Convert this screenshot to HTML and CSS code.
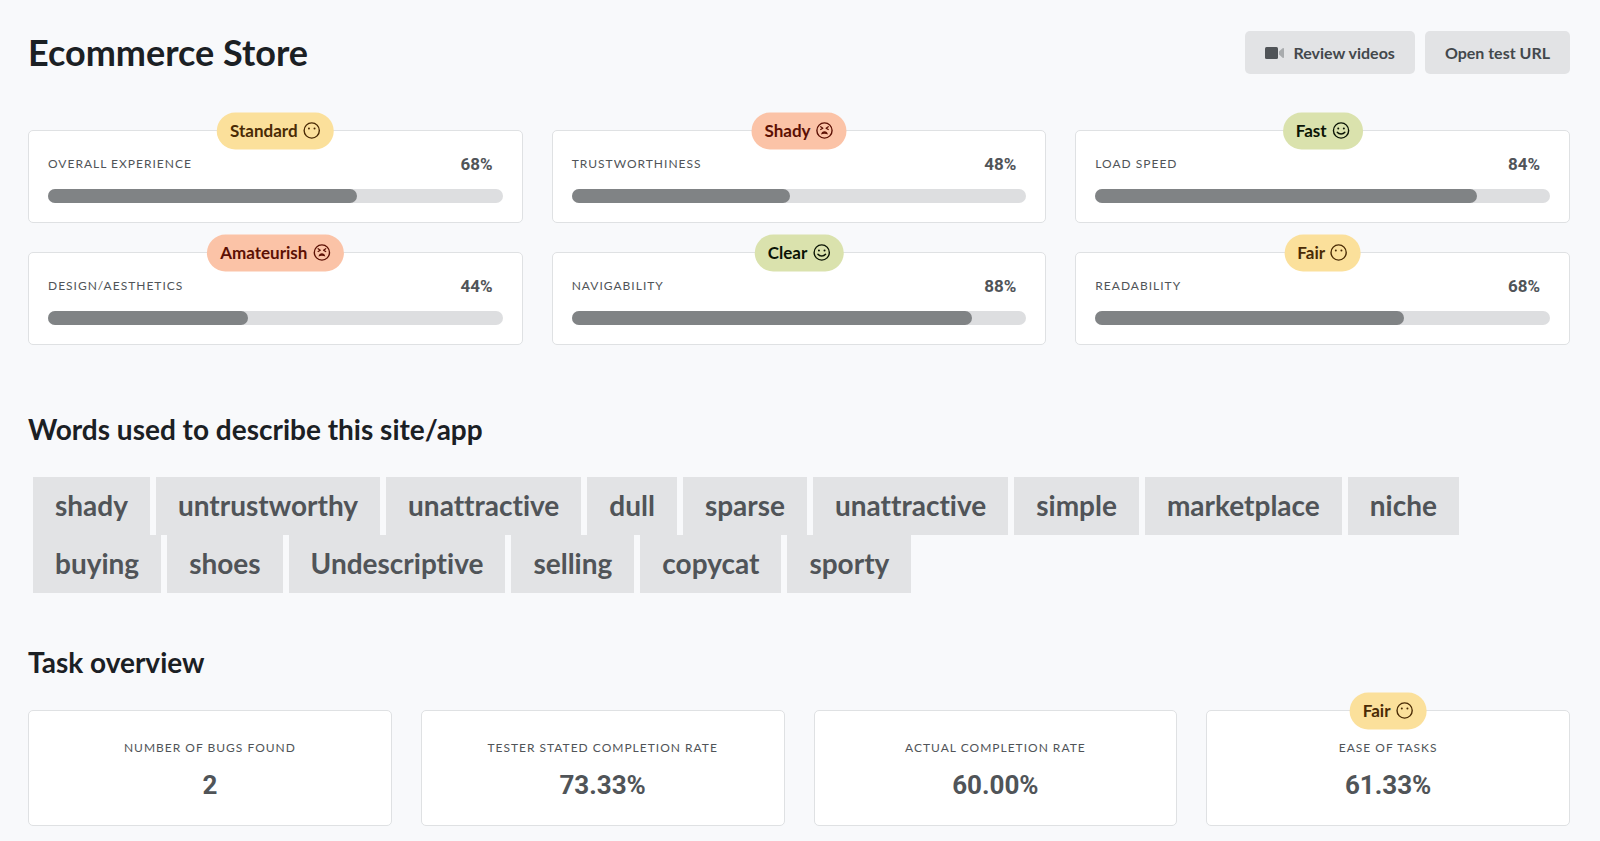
FILE: index.html
```html
<!DOCTYPE html>
<html lang="en">
<head>
  <meta charset="UTF-8">
  <meta name="viewport" content="width=device-width, initial-scale=1">
  <title>Ecommerce Store</title>
  <link rel="stylesheet" href="styles.css">
</head>
<body>

<!-- Face icons used by the rating badges -->
<svg class="sprite" aria-hidden="true">
  <symbol id="face-neutral" viewBox="0 0 18 18">
    <circle cx="9" cy="9" r="7.6" fill="none" stroke="currentColor" stroke-width="1.4"/>
    <circle cx="6.2" cy="7" r="1" fill="currentColor"/>
    <circle cx="11.8" cy="7" r="1" fill="currentColor"/>
  </symbol>
  <symbol id="face-happy" viewBox="0 0 18 18">
    <circle cx="9" cy="9" r="7.6" fill="none" stroke="currentColor" stroke-width="1.4"/>
    <circle cx="6.2" cy="7" r="1" fill="currentColor"/>
    <circle cx="11.8" cy="7" r="1" fill="currentColor"/>
    <path d="M5.2 10.8c1.7 2.2 5.9 2.2 7.6 0" fill="none" stroke="currentColor" stroke-width="1.4" stroke-linecap="round"/>
  </symbol>
  <symbol id="face-sad" viewBox="0 0 18 18">
    <circle cx="9" cy="9" r="7.6" fill="none" stroke="currentColor" stroke-width="1.4"/>
    <path d="M5.2 5.2l2.2 1.5-2.2 1.3M12.8 5.2l-2.2 1.5 2.2 1.3" fill="none" stroke="currentColor" stroke-width="1.2" stroke-linecap="round" stroke-linejoin="round"/>
    <path d="M5.6 13c.4-2.200 1.700-3.200 3.400-3.200s3 1 3.400 3.200c-1.900-.9-4.900-.9-6.800 0z" fill="currentColor"/>
  </symbol>
</svg>

<header class="page-header">
  <h1>Ecommerce Store</h1>
  <div class="actions">
    <button type="button" class="btn">
      <svg class="video-icon" viewBox="0 0 20 14" aria-hidden="true">
        <rect x="0" y="1" width="13" height="12" rx="1.5" fill="#505458"/>
        <path d="M14 5.6L17.6 2.2Q19 1.4 19 3v8q0 1.6-1.4.8L14 8.4z" fill="#a8abad"/>
      </svg>
      Review videos
    </button>
    <button type="button" class="btn">Open test URL</button>
  </div>
</header>

<section class="scores">
  <div class="card score">
    <span class="badge standard">Standard <svg class="face"><use href="#face-neutral"/></svg></span>
    <div class="score-head"><span class="label">Overall experience</span><span class="percent">68%</span></div>
    <div class="bar"><div class="fill" style="width: 68%"></div></div>
  </div>
  <div class="card score">
    <span class="badge bad">Shady <svg class="face"><use href="#face-sad"/></svg></span>
    <div class="score-head"><span class="label">Trustworthiness</span><span class="percent">48%</span></div>
    <div class="bar"><div class="fill" style="width: 48%"></div></div>
  </div>
  <div class="card score">
    <span class="badge good">Fast <svg class="face"><use href="#face-happy"/></svg></span>
    <div class="score-head"><span class="label">Load speed</span><span class="percent">84%</span></div>
    <div class="bar"><div class="fill" style="width: 84%"></div></div>
  </div>
  <div class="card score">
    <span class="badge bad">Amateurish <svg class="face"><use href="#face-sad"/></svg></span>
    <div class="score-head"><span class="label">Design/aesthetics</span><span class="percent">44%</span></div>
    <div class="bar"><div class="fill" style="width: 44%"></div></div>
  </div>
  <div class="card score">
    <span class="badge good">Clear <svg class="face"><use href="#face-happy"/></svg></span>
    <div class="score-head"><span class="label">Navigability</span><span class="percent">88%</span></div>
    <div class="bar"><div class="fill" style="width: 88%"></div></div>
  </div>
  <div class="card score">
    <span class="badge standard">Fair <svg class="face"><use href="#face-neutral"/></svg></span>
    <div class="score-head"><span class="label">Readability</span><span class="percent">68%</span></div>
    <div class="bar"><div class="fill" style="width: 68%"></div></div>
  </div>
</section>

<section class="words">
  <h2>Words used to describe this site/app</h2>
  <ul class="tags">
    <li>shady</li>
    <li>untrustworthy</li>
    <li>unattractive</li>
    <li>dull</li>
    <li>sparse</li>
    <li>unattractive</li>
    <li>simple</li>
    <li>marketplace</li>
    <li>niche</li>
    <li>buying</li>
    <li>shoes</li>
    <li>Undescriptive</li>
    <li>selling</li>
    <li>copycat</li>
    <li>sporty</li>
  </ul>
</section>

<section class="tasks">
  <h2>Task overview</h2>
  <div class="task-grid">
    <div class="card task">
      <span class="label">Number of bugs found</span>
      <span class="value">2</span>
    </div>
    <div class="card task">
      <span class="label">Tester stated completion rate</span>
      <span class="value">73.33%</span>
    </div>
    <div class="card task">
      <span class="label">Actual completion rate</span>
      <span class="value">60.00%</span>
    </div>
    <div class="card task">
      <span class="badge standard">Fair <svg class="face"><use href="#face-neutral"/></svg></span>
      <span class="label">Ease of tasks</span>
      <span class="value">61.33%</span>
    </div>
  </div>
</section>

</body>
</html>
```
FILE: styles.css
```css
* {
  box-sizing: border-box;
}
body {
  margin: 0;
  padding: 31px 30px 14px 28px;
  background: #f8f9fb;
  color: #1b2024;
  font-family: Lato, "Liberation Sans", sans-serif;
  font-variant-ligatures: none;
}
h1, h2 {
  margin: 0;
  font-weight: 700;
}
h1 {
  font-size: 36px;
  line-height: 42px;
}
h2 {
  font-size: 28px;
  line-height: 36px;
}
.sprite {
  position: absolute;
  width: 0;
  height: 0;
}
.page-header {
  display: flex;
  justify-content: space-between;
  align-items: flex-start;
  margin-bottom: 56px;
}
.actions {
  display: flex;
  gap: 10px;
}
.btn {
  display: flex;
  align-items: center;
  gap: 8px;
  height: 43px;
  padding: 0 20px;
  border: 0;
  border-radius: 5px;
  background: #e2e3e5;
  color: #43484c;
  font: 700 16px/20px Lato, "Liberation Sans", sans-serif;
  cursor: pointer;
}
.video-icon {
  width: 20px;
  height: 14px;
}
.card {
  position: relative;
  background: #fff;
  border: 1px solid #dfe1e3;
  border-radius: 5px;
}
.scores {
  display: grid;
  grid-template-columns: repeat(3, 1fr);
  gap: 29px;
  margin-bottom: 66px;
}
.score {
  height: 93px;
  padding: 21px 19px 0;
}
.score-head {
  display: flex;
  justify-content: space-between;
  align-items: center;
  height: 24px;
  padding-right: 10px;
  margin-bottom: 13px;
}
.label {
  color: #505458;
  font-size: 12px;
  line-height: 20px;
  letter-spacing: 1px;
  text-transform: uppercase;
}
.percent, .value {
  color: #505458;
  font-family: Roboto, "Liberation Sans", sans-serif;
  font-weight: 700;
}
.percent {
  font-size: 17px;
}
.bar {
  height: 14px;
  border-radius: 7px;
  background: #dddee0;
}
.fill {
  height: 100%;
  border-radius: 7px;
  background: #808385;
}

/* Badge sits over the top border of its card */
.badge {
  position: absolute;
  top: 0;
  left: 50%;
  transform: translate(-50%, -50%);
  display: flex;
  align-items: center;
  gap: 5px;
  height: 37px;
  padding: 0 13px 2px;
  border-radius: 19px;
  font-size: 17px;
  font-weight: 700;
  white-space: nowrap;
}
.face {
  width: 18px;
  height: 18px;
}
.standard { background: #fbe09b; color: #4a2b05; }
.bad { background: #fbc3a7; color: #5c1004; }
.good { background: #dae2ad; color: #0b1405; }

.tags {
  display: flex;
  flex-wrap: wrap;
  column-gap: 6px;
  margin: 30px 0 51px;
  padding: 0 0 0 5px;
  list-style: none;
}
.tags li {
  padding: 0 22px 2px;
  background: #e2e3e5;
  color: #505458;
  font-size: 28px;
  font-weight: 700;
  line-height: 56px;
}
.task-grid {
  display: grid;
  grid-template-columns: repeat(4, 1fr);
  gap: 29px;
  margin-top: 30px;
}
.task {
  display: flex;
  flex-direction: column;
  align-items: center;
  height: 116px;
  padding-top: 27px;
}
.value {
  margin-top: 11px;
  font-size: 26px;
  line-height: 32px;
}
```
